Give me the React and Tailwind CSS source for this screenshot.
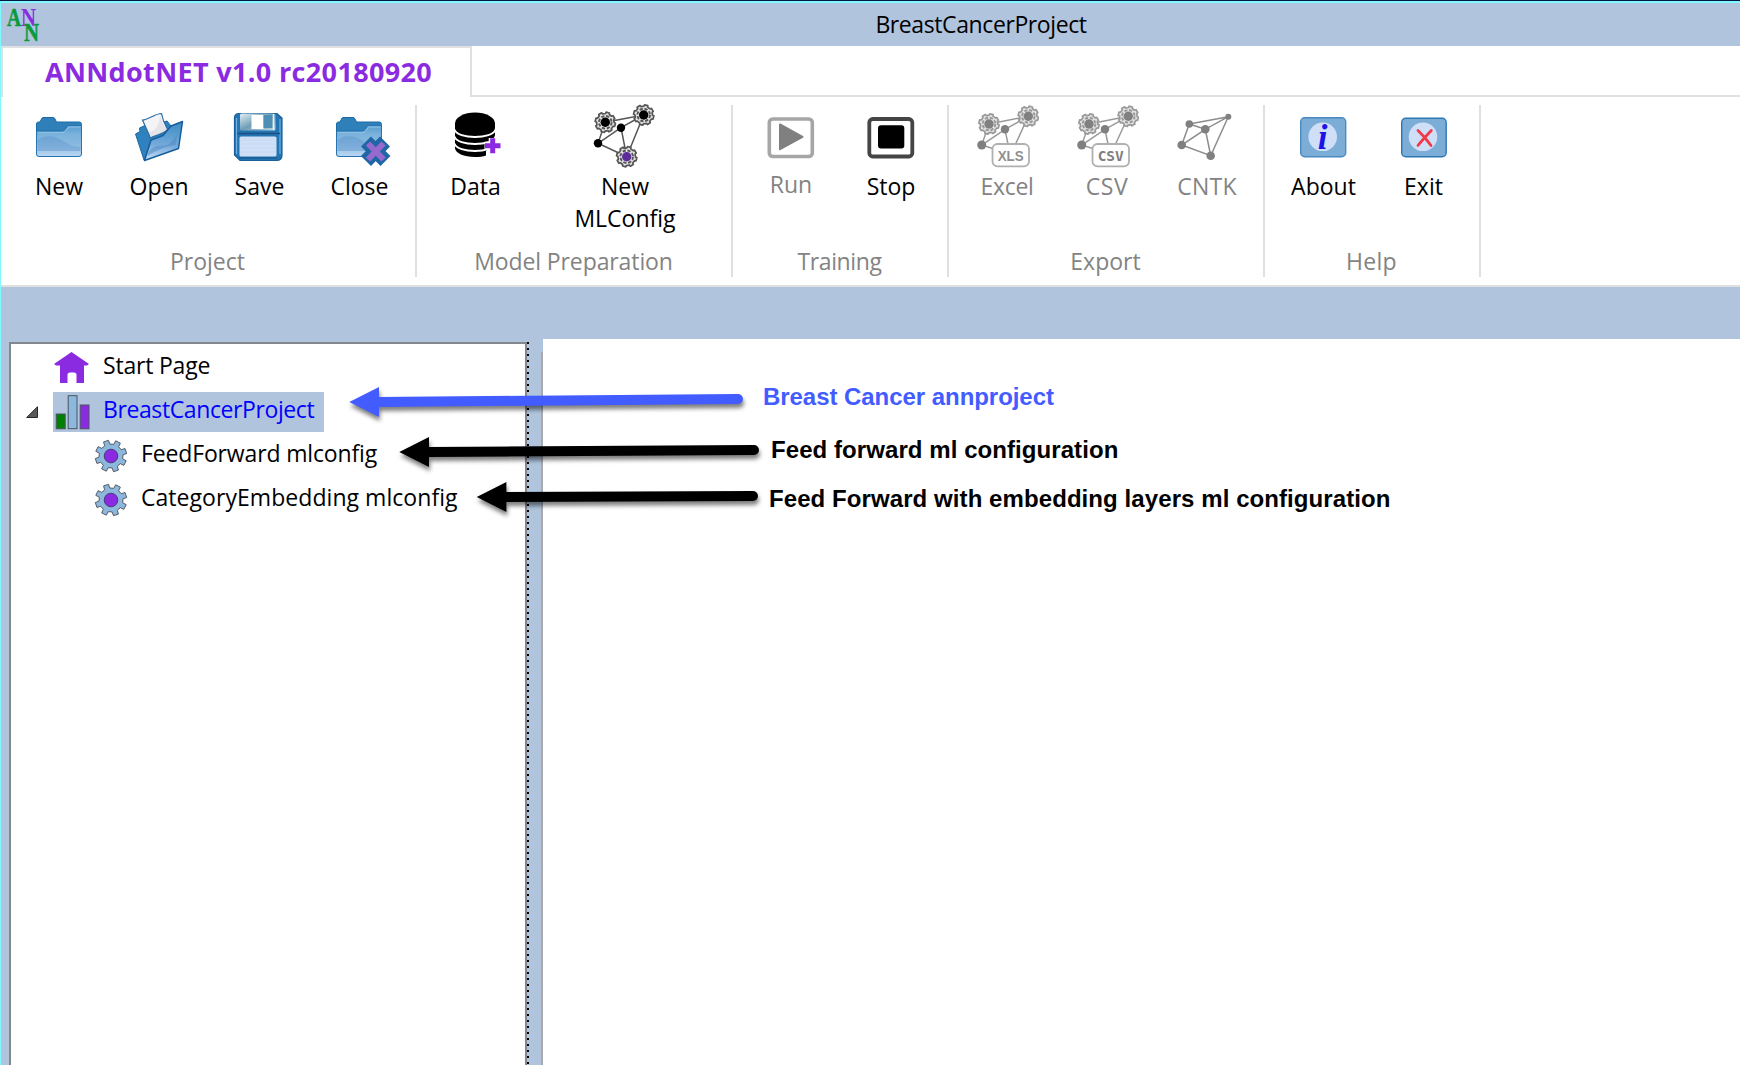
import { useId } from "react";

/* Closed outline of a cog with n teeth around (cx, cy). */
function cogPath(cx, cy, outer, inner, n, start = 0) {
  const step = (Math.PI * 2) / n;
  const pt = (r, a) =>
    `${(cx + r * Math.cos(a)).toFixed(2)} ${(cy + r * Math.sin(a)).toFixed(2)}`;
  const parts = [];
  for (let i = 0; i < n; i++) {
    const a = start + i * step;
    parts.push(
      pt(inner, a - step * 0.29),
      pt(outer, a - step * 0.21),
      pt(outer, a + step * 0.21),
      pt(inner, a + step * 0.29),
    );
  }
  return `M${parts.join("L")}Z`;
}

function Icon({ children }) {
  return (
    <svg className="block h-16 w-16 shrink-0" viewBox="0 0 64 64" fill="none">
      {children}
    </svg>
  );
}

function FolderShape() {
  const id = useId();
  return (
    <>
      <defs>
        <linearGradient id={id} x1="0" y1="0" x2="0" y2="1">
          <stop offset="0" stopColor="#5a9fd0" />
          <stop offset="1" stopColor="#b9d5f2" />
        </linearGradient>
      </defs>
      <path d="M9.500 50V20Q9.500 18 11.500 18H13L15 14Q15.500 13.500 17 13.500H26Q27.500 13.500 28 15L29.500 18H52.500Q54.500 18 54.500 20.500V50Z" fill="#2f7fb8" stroke="#1a6aa8" />
      <path d="M9.500 27H35Q37 27 38 25.500L40 22.500Q40.500 21.500 42 21.500H54.500V50Q54.500 52.500 52 52.500H12Q9.500 52.500 9.500 50Z" fill={`url(#${id})`} stroke="#2673b0" />
      <path d="M10.500 34C20 30 27 32 35 37S48 42.500 53.500 42V28.500H10.500Z" fill="#7fb5dc" opacity=".55" />
      <path d="M10.500 36C20 30 28 32 36 37S49 43 53.500 42.500V47H10.500Z" fill="#5e96cc" opacity=".5" />
      <path d="M11 28.500H36Q38 28.500 39.500 26L41.500 23H53.500" stroke="#8cc2e6" strokeWidth="1" />
    </>
  );
}

function NewIcon() {
  return <Icon><FolderShape /></Icon>;
}

function CloseIcon() {
  return (
    <Icon>
      <FolderShape />
      <path d="M39 37.500L58.500 57M58 37.500L39 57" stroke="#1f66a6" strokeWidth="14" />
      <path d="M41 39.500L56.500 55.500M56.500 39.500L41 55.500" stroke="#9669cc" strokeWidth="6" />
    </Icon>
  );
}

function OpenIcon() {
  const id = useId();
  return (
    <Icon>
      <defs>
        <linearGradient id={id} x1="0.500" y1="0" x2="0.400" y2="1">
          <stop offset="0" stopColor="#3f8fc6" />
          <stop offset=".6" stopColor="#74a9d9" />
          <stop offset="1" stopColor="#c3dbf5" />
        </linearGradient>
      </defs>
      <path d="M8.500 30L13 27.500L12.500 24L20 20.500L23 22L40 17L44 22L17 56Z" fill="#2f82bd" stroke="#1a68a6" strokeLinejoin="round" />
      <path d="M15.500 16C21 16 28 9.500 34.500 9.500C35.500 15 38 21 40.500 25.500C36 31 28 30.500 23.500 34Z" fill="#f4f4f6" stroke="#2a6da6" strokeWidth="1.200" />
      <path d="M33 11C35 19 38 23 40 25C36 30 28 30 24 33L22 28Q32 27 33 11Z" fill="#d9d9df" opacity=".55" />
      <path d="M17.500 56.500L24 36L36 31.500L44 22L55.500 17.500L51.500 44.500Z" fill={`url(#${id})`} stroke="#165d9c" strokeWidth="1.500" strokeLinejoin="round" />
      <path d="M21.500 48C29 38 37 44 42 40Q48 35 50.500 29L48.500 41Q36 42 20.500 52Z" fill="#4c87c3" opacity=".5" />
    </Icon>
  );
}

function SaveIcon() {
  const id = useId();
  return (
    <Icon>
      <defs>
        <linearGradient id={id} x1="0" y1="0" x2="1" y2="1">
          <stop offset="0" stopColor="#e2eef2" />
          <stop offset=".5" stopColor="#6f9fb8" />
          <stop offset="1" stopColor="#bcd6e0" />
        </linearGradient>
      </defs>
      <path d="M12 9.500H50L55 14V51Q55 56.500 49.500 56.500H13L7.500 51V14Q7.500 9.500 12 9.500Z" fill="#2374b3" stroke="#1a5f9c" strokeWidth="1.200" />
      <path d="M9.500 14V50M53 15V50" stroke="#6fb2df" strokeWidth="1.200" />
      <rect x="13" y="9.500" width="35.500" height="17" rx="1.500" fill={`url(#${id})`} />
      <rect x="24.500" y="11" width="12" height="14" fill="#fff" />
      <rect x="36.500" y="11" width="9" height="13" fill="#4d8fb4" />
      <path d="M46.500 10V26" stroke="#e4eff4" strokeWidth="1.500" />
      <path d="M10 29.500H53" stroke="#1d4f80" strokeWidth="1.500" />
      <rect x="12.500" y="32.500" width="37" height="20" rx="1.500" fill="#cfdff6" />
      <path d="M13.500 36H48.500M13.500 40H48.500M13.500 44H48.500M13.500 48H48.500" stroke="#c0d2ef" strokeWidth="1" strokeDasharray="1 1" />
      <path d="M12 54H50" stroke="#1d4f80" strokeWidth="1" />
    </Icon>
  );
}

function DataIcon() {
  return (
    <Icon>
      <path d="M12 19V44C12 49 21 53 32 53C36 53 40 52.500 43 51.500V47L52 40V19Z" fill="#000" />
      <ellipse cx="32" cy="19.500" rx="20" ry="11" fill="#000" />
      {[25.500, 32.500, 39.500].map((y) => (
        <path key={y} d={`M11.500 ${y}C14 ${y + 10} 50 ${y + 10} 52.500 ${y}`} stroke="#fff" strokeWidth="1.900" />
      ))}
      <path d="M52.500 24V40" stroke="#fff" strokeWidth="1.200" strokeDasharray="2 5" />
      <path d="M49.700 34V50M41.500 41.700H58" stroke="#fff" strokeWidth="8" />
      <path d="M49.700 34.300V49.200M42 41.700H57.500" stroke="#8a2be2" strokeWidth="5" />
    </Icon>
  );
}

function NodeGear({ x, y, core, line }) {
  return (
    <g>
      <path d={cogPath(x, y, 10.2, 8.8, 8, 0.25)} fill="#e2e2e2" stroke={line} strokeWidth="1.700" strokeLinejoin="round" />
      <circle cx={x} cy={y} r="6.300" stroke={line} strokeWidth="1.900" strokeDasharray="3.200 1.750" />
      <circle cx={x} cy={y} r="4.700" fill={core} />
    </g>
  );
}

function NewConfigIcon() {
  return (
    <Icon>
      <path d="M12.300 18.300L50.700 11L28 23.700L5 39.300L12.300 18.300M28 23.700L33.700 52.700L5 39.300M33.700 52.700L50.700 11" stroke="#555" strokeWidth="1.500" />
      <NodeGear x={12.300} y={18.300} core="#000" line="#555" />
      <NodeGear x={50.700} y={11} core="#000" line="#555" />
      <NodeGear x={33.700} y={52.700} core="#5b2c9a" line="#555" />
      <circle cx="28" cy="23.700" r="4.200" fill="#000" />
      <circle cx="5" cy="39.300" r="4.200" fill="#000" />
    </Icon>
  );
}

function ExportIcon({ tag, mono }) {
  return (
    <Icon>
      <path d="M14 20L53.300 12.300L30 25.300L6.700 41L14 20M30 25.300L35 50L6.700 41M36 50L53.300 12.300" stroke="#9a9a9a" strokeWidth="1.500" />
      <NodeGear x={14} y={20} core="#808080" line="#999" />
      <NodeGear x={53.300} y={12.300} core="#808080" line="#999" />
      <circle cx="30" cy="25.300" r="4.200" fill="#808080" />
      <circle cx="6.700" cy="41" r="4.500" fill="#808080" />
      <rect x="17.500" y="40" width="36.500" height="22.300" rx="5" fill="#fff" stroke="#b0b0b0" strokeWidth="1.800" />
      <text
        x="35.700" y="56.700" textAnchor="middle" textLength="26" lengthAdjust="spacingAndGlyphs"
        className={mono ? "fill-[#808080] font-['DejaVu_Sans_Mono',monospace] text-[14px] font-bold" : "fill-[#909090] font-['Liberation_Sans',sans-serif] text-[15px] font-bold"}
      >
        {tag}
      </text>
    </Icon>
  );
}

function CntkIcon() {
  return (
    <Icon>
      <path d="M14.300 20L53.300 12.700L30.300 25.300L14.300 20L6.700 41L30.300 25.300L35.700 51.700L6.700 41M35.700 51.700L53.300 12.700" stroke="#8c8c8c" strokeWidth="1.500" />
      <g fill="#808080">
        <circle cx="14.300" cy="20" r="3.800" />
        <circle cx="53.300" cy="12.700" r="3" />
        <circle cx="30.300" cy="25.300" r="4.300" />
        <circle cx="6.700" cy="41" r="4.300" />
        <circle cx="35.700" cy="51.700" r="4.300" />
      </g>
    </Icon>
  );
}

function RunIcon() {
  return (
    <Icon>
      <rect x="10.300" y="15" width="43" height="37.500" rx="3.500" stroke="#a6a6a6" strokeWidth="3.600" />
      <path d="M21 20.500L43.500 32.800L21 45.200Z" fill="#808080" stroke="#808080" strokeWidth="2" strokeLinejoin="round" />
    </Icon>
  );
}

function StopIcon() {
  return (
    <Icon>
      <rect x="10.300" y="15" width="43" height="37.500" rx="3.500" stroke="#474445" strokeWidth="3.800" />
      <rect x="19" y="21.300" width="26.300" height="23.300" rx="3" fill="#000" />
    </Icon>
  );
}

function AboutIcon() {
  return (
    <Icon>
      <rect x="9.700" y="13.700" width="45" height="39" rx="4" fill="#7badd6" stroke="#4a8ac0" strokeWidth="1.400" />
      <circle cx="31.700" cy="32.800" r="14.300" fill="#cfdff8" />
      <text x="31.700" y="44.500" textAnchor="middle" className="fill-[#1c14e6] font-['Liberation_Serif',serif] text-[35px] font-bold italic">i</text>
    </Icon>
  );
}

function ExitIcon() {
  return (
    <Icon>
      <rect x="10.700" y="14.200" width="44.500" height="38.500" rx="4" fill="#7badd6" stroke="#2f78b4" strokeWidth="1.400" />
      <circle cx="32" cy="32.800" r="14.300" fill="#cfdff8" />
      <path d="M27 26.500Q34 33 40 41.500M40.300 26.500Q33 34 27 41.300" stroke="#f03a48" strokeWidth="2.800" strokeLinecap="round" />
    </Icon>
  );
}

function RibbonButton({ icon, label, second, className = "w-[100px]", labelClass = "mt-0.5" }) {
  return (
    <div className={`flex flex-col items-center ${className}`}>
      {icon}
      <div className={`text-center leading-8 whitespace-nowrap ${labelClass}`}>
        {label}
        {second && <div>{second}</div>}
      </div>
    </div>
  );
}

function RibbonGroup({ title, titleClass = "", children }) {
  return (
    <section className="mt-2 flex h-[172px] flex-col border-r-2 border-[#e0e0e0] pr-1.5 pl-2">
      <div className="-mt-px flex h-[141px] items-start">{children}</div>
      <div className={`pr-[3px] text-center leading-8 text-[#838383] ${titleClass}`}>{title}</div>
    </section>
  );
}

function TreeRow({ icon, label, className = "", textClass = "" }) {
  return (
    <div className={`flex h-10 w-max items-start ${className}`}>
      {icon}
      <span className={`pt-px leading-8 whitespace-nowrap ${textClass}`}>{label}</span>
    </div>
  );
}

function GearIcon() {
  return (
    <svg className="mt-0.5 mr-3 block h-9 w-9 shrink-0" viewBox="0 0 36 36">
      <path d={cogPath(18, 18, 15.900, 12, 8, Math.PI / 8 + 0.07)} fill="#8db8dd" stroke="#555b66" strokeWidth="1" strokeLinejoin="round" />
      <circle cx="18" cy="18" r="6.800" fill="#8a2be2" stroke="#4b3a78" strokeWidth="1" />
    </svg>
  );
}

function Arrow({ tip, tail, color }) {
  const [x, y] = tip;
  const [tx, ty] = tail;
  return (
    <g className="drop-shadow-[1px_4px_2px_rgba(0,0,0,0.5)]">
      <path d={`M${x + 28} ${y}L${tx} ${ty}`} stroke={color} strokeWidth="10" strokeLinecap="round" />
      <path d={`M${x} ${y}L${x + 29.700} ${y - 15}V${y + 15}Z`} fill={color} />
    </g>
  );
}

export default function App() {
  return (
    <div className="relative h-[1077px] w-[1742px] overflow-hidden bg-white font-['Open_Sans',sans-serif] text-[23px] text-black">
      <div className="flex h-[1065px] w-[1740px] flex-col border-l border-[#7df9ff]">
        {/* title bar */}
        <header className="-ml-px h-[46px] shrink-0 border-t border-[#0b1440]">
          <div className="flex h-[45px] justify-center border-t-2 border-l border-[#7df9ff] bg-[#b0c4de]">
            <svg className="ml-1 h-[42px] w-[40px]" viewBox="-2 -4 40 42">
              <g className="font-['Liberation_Serif',serif] text-[26px] font-bold">
                <text x="14" y="19" textLength="15" lengthAdjust="spacingAndGlyphs" fill="#8a2be2">N</text>
                <text x="0" y="19" textLength="14" lengthAdjust="spacingAndGlyphs" fill="#0a9a3c" stroke="#0a9a3c" strokeWidth=".5">A</text>
                <text x="17" y="34" textLength="15" lengthAdjust="spacingAndGlyphs" fill="#0a9a3c" stroke="#0a9a3c" strokeWidth=".5">N</text>
              </g>
            </svg>
            <h1 className="flex-1 pt-[5px] pl-[177px] text-center leading-8 tracking-[-0.4px]">BreastCancerProject</h1>
          </div>
        </header>

        {/* tab strip */}
        <div className="flex h-[51px] shrink-0">
          <div className="w-[471px] border-2 border-b-0 border-[#e0e0e0] pt-1.5 pl-[42px] text-[27px] leading-9 font-bold tracking-[0.35px] whitespace-nowrap text-[#8a2be2]">
            ANNdotNET v1.0 rc20180920
          </div>
          <div className="flex-1 border-b-2 border-[#e0e0e0]" />
        </div>

        {/* ribbon */}
        <div className="flex h-[190px] shrink-0 border-b-2 border-[#e0e0e0]">
          <RibbonGroup title="Project">
            <RibbonButton icon={<NewIcon />} label="New" />
            <RibbonButton icon={<OpenIcon />} label="Open" />
            <RibbonButton icon={<SaveIcon />} label="Save" labelClass="mt-0.5 pl-px" />
            <RibbonButton icon={<CloseIcon />} label="Close" labelClass="mt-0.5 pl-px" />
          </RibbonGroup>
          <RibbonGroup title="Model Preparation" titleClass="tracking-[-0.1px]">
            <RibbonButton icon={<DataIcon />} label="Data" labelClass="mt-0.5 pl-px" />
            <RibbonButton icon={<NewConfigIcon />} label="New" second="MLConfig" className="w-[200px]" />
          </RibbonGroup>
          <RibbonGroup title="Training" titleClass="tracking-[-0.4px]">
            <RibbonButton icon={<RunIcon />} label="Run" labelClass="text-[#838383]" />
            <RibbonButton icon={<StopIcon />} label="Stop" />
          </RibbonGroup>
          <RibbonGroup title="Export">
            <RibbonButton icon={<ExportIcon tag="XLS" />} label="Excel" labelClass="mt-0.5 text-[#838383] tracking-[-0.3px]" />
            <RibbonButton icon={<ExportIcon tag="CSV" mono />} label="CSV" labelClass="mt-0.5 text-[#838383] tracking-[0.6px]" />
            <RibbonButton icon={<CntkIcon />} label="CNTK" labelClass="mt-0.5 text-[#838383] tracking-[0.2px]" />
          </RibbonGroup>
          <RibbonGroup title="Help" titleClass="tracking-[0.3px]">
            <RibbonButton icon={<AboutIcon />} label="About" labelClass="mt-0.5 pl-px" />
            <RibbonButton icon={<ExitIcon />} label="Exit" labelClass="mt-0.5 pl-px" />
          </RibbonGroup>
        </div>

        {/* work area */}
        <div className="flex min-h-0 flex-1 bg-[#b0c4de]">
          <nav className="mt-[55px] ml-2 w-[518px] border-2 border-b-0 border-[#828790] bg-white pt-1">
            <div className="flex flex-col gap-1">
              <TreeRow
                label="Start Page"
                className="pl-[42px]"
                textClass="tracking-[-0.2px]"
                icon={
                  <svg className="mt-1 mr-3.5 block h-8 w-9 shrink-0" viewBox="0 0 36 32">
                    <path d="M1 12L18.500 0L36 12L34 13.500H31V31H23.500V23Q23.500 20.500 21 20.500H17Q14.500 20.500 14.500 23V31H7V13.500H3Z" fill="#8a2be2" />
                  </svg>
                }
              />
              <div className="flex items-center">
                <svg className="ml-[15px] block h-3 w-3" viewBox="0 0 12 12">
                  <path d="M11.500 .7V11.500H.7Z" fill="#595959" stroke="#262626" />
                </svg>
                <TreeRow
                  label="BreastCancerProject"
                  className="ml-[15px] bg-[#b0c4de] pr-2.5"
                  textClass="text-[#0000ff] tracking-[-0.4px]"
                  icon={
                    <svg className="mr-[13px] block h-10 w-[37px] shrink-0" viewBox="0 0 37 40">
                      <g stroke="#4a5560">
                        <rect x="3.200" y="22" width="9" height="14.800" fill="#008000" />
                        <rect x="15.200" y="3.700" width="8.800" height="33" fill="#8db8dd" />
                        <rect x="27.200" y="13" width="8.800" height="23.800" fill="#8a2be2" />
                      </g>
                    </svg>
                  }
                />
              </div>
              <TreeRow icon={<GearIcon />} label="FeedForward mlconfig" className="pl-[82px]" textClass="tracking-[-0.15px]" />
              <TreeRow icon={<GearIcon />} label="CategoryEmbedding mlconfig" className="pl-[82px]" textClass="tracking-[0.05px]" />
            </div>
          </nav>
          <div className="mt-[55px] w-0.5 bg-[repeating-linear-gradient(to_bottom,#000_0px,#000_2px,transparent_2px,transparent_6px)]" />
          <div className="mt-[65px] ml-3 w-0.5 bg-[#a9a9a9]" />
          <main className="mt-[52px] flex-1 bg-white" />
        </div>
      </div>

      {/* callouts drawn over the window */}
      <svg className="pointer-events-none absolute top-0 left-0 h-[600px] w-[800px]" viewBox="0 0 800 600" fill="none">
        <Arrow tip={[349.300, 402]} tail={[738, 399]} color="#425cff" />
        <Arrow tip={[399.300, 452]} tail={[754, 450]} color="#000" />
        <Arrow tip={[476.700, 497]} tail={[753, 496]} color="#000" />
      </svg>
      <div className="absolute top-[383px] left-[763px] font-['Liberation_Sans',Arial,sans-serif] text-2xl leading-7 font-bold tracking-[-0.05px] whitespace-nowrap text-[#425cff]">
        Breast Cancer annproject
      </div>
      <div className="absolute top-[436px] left-[771px] font-['Liberation_Sans',Arial,sans-serif] text-2xl leading-7 font-bold tracking-[0.07px] whitespace-nowrap">
        Feed forward ml configuration
      </div>
      <div className="absolute top-[485px] left-[769px] font-['Liberation_Sans',Arial,sans-serif] text-2xl leading-7 font-bold tracking-[0.08px] whitespace-nowrap">
        Feed Forward with embedding layers ml configuration
      </div>
    </div>
  );
}
